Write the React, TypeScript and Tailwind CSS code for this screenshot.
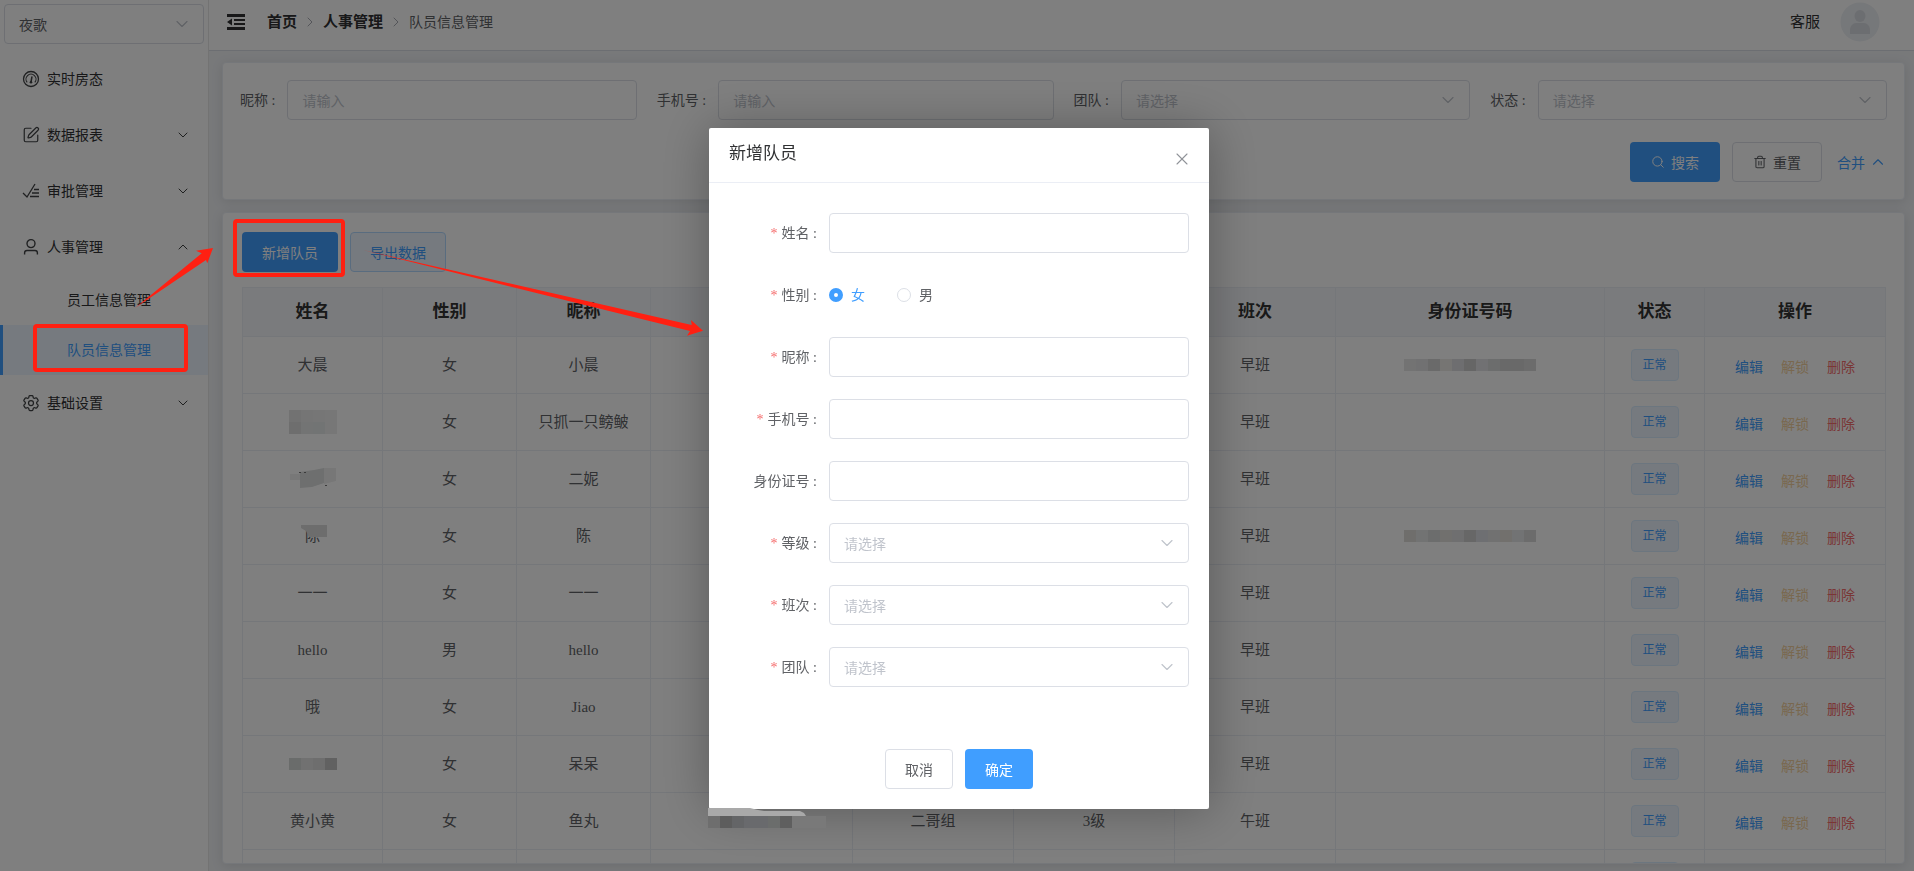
import type { ReactNode } from "react";
import { ChevronDown, ChevronRight, ChevronUp, Search, SquarePen, Trash2, X } from "lucide-react";
import { HiOutlineCog6Tooth } from "react-icons/hi2";

type MosaicProps = {
  cells: string[][];
  className?: string;
};

type Member = {
  name: ReactNode;
  gender: string;
  nickname: string;
  phone?: ReactNode;
  team?: string;
  level?: string;
  shift: string;
  idCard?: ReactNode;
};

// Pixelated block that hides private values
function Mosaic({ cells, className }: MosaicProps) {
  const width = cells[0].length * 12;
  const height = cells.length * 12;
  return (
    <svg width={width} height={height} className={className} aria-hidden="true">
      {cells.map((row, y) =>
        row.map((fill, x) => (
          <rect key={`${x}-${y}`} x={x * 12} y={y * 12} width="12" height="12" fill={fill} />
        ))
      )}
    </svg>
  );
}

const ID_CELLS_A = [["#e6e6e6", "#e2e3e5", "#d4d4d4", "#eceae6", "#dcdde0", "#cdcdcd", "#e2e3e6", "#d9dadb", "#d3d3d3", "#d2d2d2", "#d8d8d8"]];
const ID_CELLS_B = [["#dedcd9", "#e4e6e6", "#d8dbda", "#e2e0dc", "#dedfe1", "#cfcfcf", "#dcdfe4", "#e2e2e2", "#e4e0db", "#e4e6e8", "#d8d8d8"]];

const members: Member[] = [
  { name: "大晨", gender: "女", nickname: "小晨", shift: "早班", idCard: <Mosaic cells={ID_CELLS_A} className="mx-auto" /> },
  {
    name: (
      <Mosaic
        cells={[
          ["#e4e4e4", "#ebebeb", "#ececec", "#eeeeee"],
          ["#dcdcdc", "#e6e8e8", "#e4e8e8", "#eeeeee"],
        ]}
        className="mx-auto"
      />
    ),
    gender: "女",
    nickname: "只抓一只鳑鲏",
    shift: "早班",
  },
  {
    name: (
      <svg width="46" height="22" viewBox="0 0 46 22" className="mx-auto" aria-hidden="true">
        <path d="M0 6h10v6H0z" fill="#f0f0f0" />
        <path d="M10 4l14-2 10-2v15l-12 4-12 1z" fill="#dcdede" />
        <path d="M34 0h12v13l-12 3z" fill="#efefef" />
        <path d="M9 4h2v1H9zM14 4h2v1h-2zM35 17h2v1h-2z" fill="#777" />
      </svg>
    ),
    gender: "女",
    nickname: "二妮",
    shift: "早班",
  },
  {
    name: (
      <span className="relative inline-block">
        陈
        <svg width="26" height="12" className="absolute -left-1 top-0" aria-hidden="true">
          <path d="M0 0h26v12H8L5 6 0 3z" fill="#dadada" />
        </svg>
      </span>
    ),
    gender: "女",
    nickname: "陈",
    shift: "早班",
    idCard: <Mosaic cells={ID_CELLS_B} className="mx-auto" />,
  },
  { name: "一一", gender: "女", nickname: "一一", shift: "早班" },
  { name: "hello", gender: "男", nickname: "hello", shift: "早班" },
  { name: "哦", gender: "女", nickname: "Jiao", shift: "早班" },
  { name: <Mosaic cells={[["#d4d9d7", "#e2e2e2", "#dddddd", "#c2c2c2"]]} className="mx-auto" />, gender: "女", nickname: "呆呆", shift: "早班" },
  { name: "黄小黄", gender: "女", nickname: "鱼丸", team: "二哥组", level: "3级", shift: "午班" },
];

function DashboardIcon() {
  return (
    <svg width="18" height="18" viewBox="0 0 18 18" fill="none" stroke="currentColor" strokeWidth="1.3">
      <circle cx="9" cy="9" r="7.5" />
      <path d="M5.2 12.4a5 5 0 1 1 7.6 0" strokeWidth="1.1" />
      <path d="M9 12 9.900 7" strokeWidth="1.5" strokeLinecap="round" />
      <circle cx="9" cy="12.200" r="1.300" fill="currentColor" stroke="none" />
    </svg>
  );
}

function ApprovalIcon() {
  return (
    <svg width="18" height="18" viewBox="0 0 18 18" fill="none" stroke="currentColor" strokeWidth="1.3">
      <path d="M1 11l4 4L13 2" />
      <path d="M12 7.5h5M10 11h7M8 14.5h9" />
    </svg>
  );
}

function PersonIcon() {
  return (
    <svg width="18" height="18" viewBox="0 0 18 18" fill="none" stroke="currentColor" strokeWidth="1.4">
      <circle cx="9" cy="5.6" r="4" />
      <path d="M2.6 16.5v-1.7c0-1.4 1-2.3 2.4-2.3h8c1.4 0 2.4.9 2.4 2.3v1.7" />
    </svg>
  );
}

function MenuItem({ icon, label, arrow }: { icon: ReactNode; label: string; arrow?: "up" | "down" }) {
  return (
    <button type="button" className="flex h-14 w-full items-center gap-[7px] pl-[22px] pr-[17px] text-[14px] text-[#303133]">
      <span className="flex w-[18px] justify-center text-[#404244]">{icon}</span>
      <span className="flex-1 text-left">{label}</span>
      {arrow === "down" && <ChevronDown size={16} strokeWidth={1.4} />}
      {arrow === "up" && <ChevronUp size={16} strokeWidth={1.4} />}
    </button>
  );
}

function Sidebar() {
  return (
    <aside className="flex w-[209px] shrink-0 flex-col border-r border-[#e6e6e6] bg-white">
      <div className="relative m-1 mb-[7px]">
        <select
          aria-label="门店"
          className="h-10 w-full appearance-none rounded border border-[#dcdfe6] bg-white px-[14px] font-['Noto_Sans_CJK_SC',sans-serif] text-[14px] text-[#606266]"
        >
          <option>夜歌</option>
        </select>
        <ChevronDown size={20} strokeWidth={1.4} className="pointer-events-none absolute right-3 top-[10px] text-[#c0c4cc]" />
      </div>
      <nav>
        <MenuItem icon={<DashboardIcon />} label="实时房态" />
        <MenuItem icon={<SquarePen size={18} strokeWidth={1.6} />} label="数据报表" arrow="down" />
        <MenuItem icon={<ApprovalIcon />} label="审批管理" arrow="down" />
        <MenuItem icon={<PersonIcon />} label="人事管理" arrow="up" />
        <a href="#staff" className="flex h-[50px] items-center pl-[67px] text-[14px] text-[#303133]">
          员工信息管理
        </a>
        <a href="#members" className="flex h-[50px] items-center border-l-3 border-[#409eff] bg-[#ecf5ff] pl-16 text-[14px] text-[#409eff]">
          队员信息管理
        </a>
        <MenuItem icon={<HiOutlineCog6Tooth size={20} className="shrink-0" />} label="基础设置" arrow="down" />
      </nav>
    </aside>
  );
}

function TopBar() {
  return (
    <header className="flex h-[51px] shrink-0 items-center border-b border-[#d8dce5] bg-white pb-[6px] pl-[18px] pr-[34px]">
      <button type="button" aria-label="收起菜单" className="mr-[22px] text-[#303133]">
        <svg width="18" height="18" viewBox="0 0 18 18" fill="currentColor">
          <path d="M0 1h18v3H0zM7 6h11v2H7zM7 10h11v2H7zM0 14h18v3H0zM0 9l5-3.500v7z" />
        </svg>
      </button>
      <nav className="flex items-center gap-[5px] text-[14px] text-[#606266]">
        <a href="#home" className="text-[15px] font-bold text-[#303133]">首页</a>
        <ChevronRight size={16} strokeWidth={1.5} className="text-[#a8abb2]" />
        <a href="#hr" className="text-[15px] font-bold text-[#303133]">人事管理</a>
        <ChevronRight size={16} strokeWidth={1.5} className="text-[#a8abb2]" />
        <span>队员信息管理</span>
      </nav>
      <span className="ml-auto mr-5 text-[15px] text-[#303133]">客服</span>
      <svg width="40" height="40" viewBox="0 0 40 40">
        <circle cx="20" cy="20" r="19.500" fill="#edf0f4" />
        <ellipse cx="20" cy="14" rx="5.500" ry="6" fill="#d9dce2" />
        <path d="M10 32v-4c0-4 3-7 6-7h8c3 0 6 3 6 7v4z" fill="#d9dce2" />
      </svg>
    </header>
  );
}

function FilterField({ id, label, placeholder, select }: { id: string; label: string; placeholder: string; select?: boolean }) {
  return (
    <div className="flex items-center">
      <label htmlFor={id} className="shrink-0 pr-3 text-[14px] text-[#606266]">{label} :</label>
      <div className="relative min-w-0 flex-1">
        {select ? (
          <>
            <select id={id} className="h-10 w-full appearance-none rounded border border-[#dcdfe6] bg-white px-[14px] font-['Noto_Sans_CJK_SC',sans-serif] text-[14px] text-[#c0c4cc]">
              <option>{placeholder}</option>
            </select>
            <ChevronDown size={20} strokeWidth={1.4} className="pointer-events-none absolute right-3 top-[10px] text-[#c0c4cc]" />
          </>
        ) : (
          <input
            id={id}
            placeholder={placeholder}
            className="h-10 w-full rounded border border-[#dcdfe6] bg-white px-[14px] font-['Noto_Sans_CJK_SC',sans-serif] text-[14px] placeholder:text-[#c0c4cc]"
          />
        )}
      </div>
    </div>
  );
}

function FilterCard() {
  return (
    <section className="rounded border border-[#ebeef5] bg-white p-[17px] shadow-[0_2px_12px_rgba(0,0,0,0.1)]">
      <div className="grid grid-cols-4 gap-5">
        <FilterField id="f-nickname" label="昵称" placeholder="请输入" />
        <FilterField id="f-phone" label="手机号" placeholder="请输入" />
        <FilterField id="f-team" label="团队" placeholder="请选择" select />
        <FilterField id="f-status" label="状态" placeholder="请选择" select />
      </div>
      <div className="mt-[22px] flex items-center justify-end gap-3 font-['Noto_Sans_CJK_SC',sans-serif] text-[14px]">
        <button type="button" className="flex h-10 w-[90px] items-center justify-center gap-[6px] rounded bg-[#409eff] text-white">
          <Search size={14} strokeWidth={1.7} />
          搜索
        </button>
        <button type="button" className="flex h-10 w-[90px] items-center justify-center gap-[6px] rounded border border-[#dcdfe6] bg-white text-[#606266]">
          <Trash2 size={14} strokeWidth={1.8} />
          重置
        </button>
        <button type="button" className="flex h-10 items-center gap-1 pl-[3px] text-[#409eff]">
          合并
          <ChevronUp size={18} strokeWidth={1.5} />
        </button>
      </div>
    </section>
  );
}

const cellClass = "border border-[#ebeef5] p-0";

function MemberTable() {
  return (
    <table className="w-full table-fixed border-collapse text-center text-[15px] text-[#606266]">
      <colgroup>
        <col className="w-[140px]" />
        <col className="w-[134px]" />
        <col className="w-[134px]" />
        <col className="w-[202px]" />
        <col className="w-[161px]" />
        <col className="w-[161px]" />
        <col className="w-[161px]" />
        <col className="w-[269px]" />
        <col className="w-[100px]" />
        <col className="w-[181px]" />
      </colgroup>
      <thead>
        <tr className="h-[49px] bg-[#f5f7fa] text-[17px] text-[#333333]">
          {["姓名", "性别", "昵称", "手机号", "团队", "等级", "班次", "身份证号码", "状态", "操作"].map((title) => (
            <th key={title} className="border border-[#ebeef5] p-0 font-bold">{title}</th>
          ))}
        </tr>
      </thead>
      <tbody>
        {members.map((m, i) => (
          <tr key={i} className="h-[57px]">
            <td className={cellClass}>{m.name}</td>
            <td className={cellClass}>{m.gender}</td>
            <td className={cellClass}>{m.nickname}</td>
            <td className={cellClass}>{m.phone}</td>
            <td className={cellClass}>{m.team}</td>
            <td className={cellClass}>{m.level}</td>
            <td className={cellClass}>{m.shift}</td>
            <td className={cellClass}>{m.idCard}</td>
            <td className={cellClass}>
              <span className="mx-auto flex h-8 w-12 items-center justify-center rounded border border-[#d9ecff] bg-[#ecf5ff] text-[12px] text-[#409eff]">
                正常
              </span>
            </td>
            <td className={cellClass}>
              <div className="flex justify-center gap-[18px] pt-[3px] font-['Noto_Sans_CJK_SC',sans-serif] text-[14px]">
                <button type="button" className="text-[#409eff]">编辑</button>
                <button type="button" className="text-[#f3d19e]">解锁</button>
                <button type="button" className="text-[#f56c6c]">删除</button>
              </div>
            </td>
          </tr>
        ))}
        <tr className="h-[57px]">
          {Array.from({ length: 8 }).map((_, i) => (
            <td key={i} className={cellClass} />
          ))}
          <td className={cellClass}>
            <span className="mx-auto block h-8 w-12 rounded border border-[#d9ecff] bg-[#ecf5ff]" />
          </td>
          <td className={cellClass} />
        </tr>
      </tbody>
    </table>
  );
}

function FormRow({ id, label, required, children }: { id: string; label: string; required?: boolean; children: ReactNode }) {
  return (
    <div className="flex h-10 items-center">
      <label htmlFor={id} className="w-[100px] shrink-0 pr-3 text-right text-[14px] text-[#606266]">
        {required && <span className="mr-1 text-[#f56c6c]">*</span>}
        {label} :
      </label>
      <div className="relative flex-1">{children}</div>
    </div>
  );
}

function TextBox({ id }: { id: string }) {
  return <input id={id} className="block h-10 w-full rounded border border-[#dcdfe6] bg-white px-[14px] text-[14px]" />;
}

function SelectBox({ id }: { id: string }) {
  return (
    <>
      <select id={id} className="block h-10 w-full appearance-none rounded border border-[#dcdfe6] bg-white px-[14px] font-['Noto_Sans_CJK_SC',sans-serif] text-[14px] text-[#c0c4cc]">
        <option>请选择</option>
      </select>
      <ChevronDown size={20} strokeWidth={1.4} className="pointer-events-none absolute right-3 top-[10px] text-[#c0c4cc]" />
    </>
  );
}

const radioClass =
  "size-[14px] appearance-none rounded-full border border-[#dcdfe6] bg-white checked:border-5 checked:border-[#409eff]";

function MemberDialog() {
  return (
    <div className="fixed inset-0 flex items-start justify-center bg-black/50 pl-1 pt-32">
      <div role="dialog" aria-labelledby="dialog-title" className="w-[500px] rounded-xs bg-white shadow-[1px_1px_50px_rgba(0,0,0,0.3)]">
        <div className="flex h-[55px] items-start justify-between border-b border-[#ebeef5] pl-5 pr-[17px] pt-[14px]">
          <h2 id="dialog-title" className="text-[17px] leading-6 text-[#303133]">新增队员</h2>
          <button type="button" aria-label="关闭" className="pt-[7px] text-[#909399]">
            <X size={20} strokeWidth={1.3} />
          </button>
        </div>
        <form className="flex flex-col gap-[22px] px-5 pt-[30px]">
          <FormRow id="name" label="姓名" required><TextBox id="name" /></FormRow>
          <FormRow id="female" label="性别" required>
            <div className="flex gap-8 text-[14px]">
              <label className="flex items-center gap-2 text-[#409eff]">
                <input id="female" type="radio" name="gender" defaultChecked className={radioClass} />女
              </label>
              <label className="flex items-center gap-2 text-[#606266]">
                <input type="radio" name="gender" className={radioClass} />男
              </label>
            </div>
          </FormRow>
          <FormRow id="nickname" label="昵称" required><TextBox id="nickname" /></FormRow>
          <FormRow id="phone" label="手机号" required><TextBox id="phone" /></FormRow>
          <FormRow id="idcard" label="身份证号"><TextBox id="idcard" /></FormRow>
          <FormRow id="level" label="等级" required><SelectBox id="level" /></FormRow>
          <FormRow id="shift" label="班次" required><SelectBox id="shift" /></FormRow>
          <FormRow id="team" label="团队" required><SelectBox id="team" /></FormRow>
        </form>
        <div className="flex justify-center gap-3 pb-5 pt-[62px] font-['Noto_Sans_CJK_SC',sans-serif] text-[14px]">
          <button type="button" className="h-10 w-[68px] rounded border border-[#dcdfe6] bg-white text-[#606266]">取消</button>
          <button type="button" className="h-10 w-[68px] rounded bg-[#409eff] text-white">确定</button>
        </div>
      </div>
    </div>
  );
}

// Hand-drawn marks that explain the click path
function Annotations() {
  return (
    <svg width="1300" height="871" className="pointer-events-none fixed left-0 top-0" aria-hidden="true">
      <path d="M708 808h42l8 2 6 1h36l4 2 2 3v1h-98z" fill="#a9a9a9" />
      <path d="M708 816h12v12h-12z" fill="#6e6e6e" />
      <path d="M720 816h12v12h-12z" fill="#5d5d5d" />
      <path d="M732 816h12v12h-12z" fill="#646567" />
      <path d="M744 816h24v12h-24z" fill="#696a6d" />
      <path d="M768 816h12v12h-12z" fill="#6b6d6c" />
      <path d="M780 816h12v12h-12z" fill="#5f5f5f" />
      <path d="M792 816h34v12h-34z" fill="#797979" />
      <g fill="none" stroke="#ff2012" strokeWidth="4">
        <rect x="35" y="326" width="151" height="44" rx="2" />
        <rect x="235" y="221" width="108" height="54" rx="2" />
      </g>
      <g fill="#ff2012">
        <path d="M135 308L201.700 253.300 196 250.700 213 248 207.300 263.300 206 260z" />
        <path d="M363 250L691.700 325 691 320 703 330.700 687 335.700 690 331z" />
      </g>
    </svg>
  );
}

export default function App() {
  return (
    <div className="flex h-screen overflow-hidden bg-[#f0f2f5] font-['Liberation_Serif','Noto_Sans_CJK_SC',serif]">
      <Sidebar />
      <div className="flex min-w-0 flex-1 flex-col">
        <TopBar />
        <main className="flex min-h-0 flex-1 flex-col gap-3 pb-[7px] pl-[13px] pr-[9px] pt-[11px]">
          <FilterCard />
          <section className="min-h-0 flex-1 overflow-hidden rounded border border-[#ebeef5] bg-white p-[19px] shadow-[0_2px_12px_rgba(0,0,0,0.1)]">
            <div className="mb-[15px] flex gap-3 font-['Noto_Sans_CJK_SC',sans-serif] text-[14px]">
              <button type="button" className="h-10 w-24 rounded bg-[#409eff] text-white">新增队员</button>
              <button type="button" className="h-10 w-24 rounded border border-[#b3d8ff] bg-[#ecf5ff] text-[#409eff]">导出数据</button>
            </div>
            <MemberTable />
          </section>
        </main>
      </div>
      <MemberDialog />
      <Annotations />
    </div>
  );
}
